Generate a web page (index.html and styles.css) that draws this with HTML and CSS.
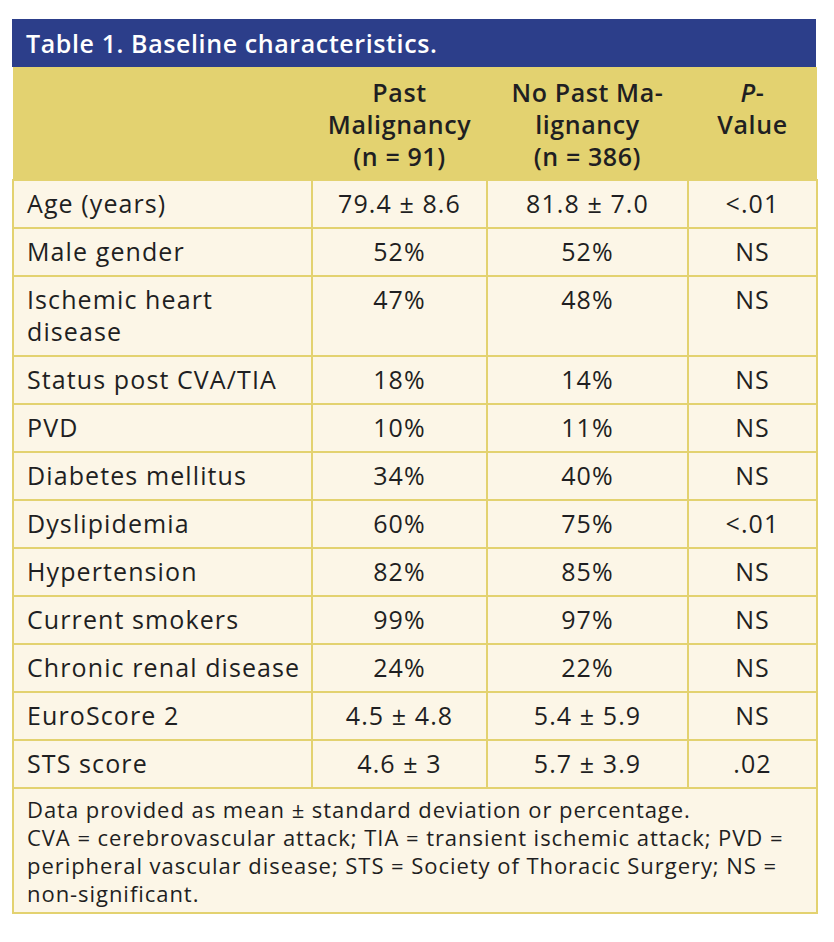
FILE: index.html
```html
<!DOCTYPE html>
<html>
<head>
<meta charset="utf-8">
<link rel="stylesheet" href="styles.css">
</head>
<body>
<div class="wrap">
  <div class="title">Table 1. Baseline characteristics.</div>
  <table class="tbl">
    <colgroup>
      <col class="c1"><col class="c2"><col class="c3"><col class="c4">
    </colgroup>
    <thead>
      <tr>
        <th></th>
        <th>Past<br>Malignancy<br>(n = 91)</th>
        <th>No Past Ma-<br>lignancy<br>(n = 386)</th>
        <th><i>P</i>-<br>Value</th>
      </tr>
    </thead>
    <tbody>
      <tr><td>Age (years)</td><td>79.4 ± 8.6</td><td>81.8 ± 7.0</td><td>&lt;.01</td></tr>
      <tr><td>Male gender</td><td>52%</td><td>52%</td><td>NS</td></tr>
      <tr><td>Ischemic heart<br>disease</td><td>47%</td><td>48%</td><td>NS</td></tr>
      <tr><td>Status post CVA/TIA</td><td>18%</td><td>14%</td><td>NS</td></tr>
      <tr><td>PVD</td><td>10%</td><td>11%</td><td>NS</td></tr>
      <tr><td>Diabetes mellitus</td><td>34%</td><td>40%</td><td>NS</td></tr>
      <tr><td>Dyslipidemia</td><td>60%</td><td>75%</td><td>&lt;.01</td></tr>
      <tr><td>Hypertension</td><td>82%</td><td>85%</td><td>NS</td></tr>
      <tr><td>Current smokers</td><td>99%</td><td>97%</td><td>NS</td></tr>
      <tr><td>Chronic renal disease</td><td>24%</td><td>22%</td><td>NS</td></tr>
      <tr><td>EuroScore 2</td><td>4.5 ± 4.8</td><td>5.4 ± 5.9</td><td>NS</td></tr>
      <tr><td>STS score</td><td>4.6 ± 3</td><td>5.7 ± 3.9</td><td>.02</td></tr>
    </tbody>
    <tfoot>
      <tr><td colspan="4">Data provided as mean ± standard deviation or percentage.<br>CVA = cerebrovascular attack; TIA = transient ischemic attack; PVD =<br>peripheral vascular disease; STS = Society of Thoracic Surgery; NS =<br>non-significant.</td></tr>
    </tfoot>
  </table>
</div>
</body>
</html>
```
FILE: styles.css
```css
html, body {
  margin: 0;
  padding: 0;
  background: #ffffff;
}
body {
  font-family: "Open Sans", "Lato", sans-serif;
  color: #1f1f22;
}
.wrap {
  margin: 19px 0 0 12px;
  width: 804px;
}
.title {
  background: #2c3e8a;
  color: #ffffff;
  font-size: 25px;
  font-weight: 600;
  letter-spacing: 0.6px;
  height: 48px;
  line-height: 48px;
  padding-left: 14px;
  box-sizing: border-box;
}
.tbl {
  width: 804px;
  border-collapse: collapse;
  table-layout: fixed;
  font-size: 25px;
  letter-spacing: 1.1px;
}
.c1 { width: 299px; }
.c2 { width: 175px; }
.c3 { width: 201px; }
.c4 { width: 129px; }
.tbl th {
  background: #e3d270;
  font-weight: 600;
  line-height: 32px;
  height: 113px;
  padding: 9px 2px 6px;
  box-sizing: border-box;
  vertical-align: top;
  text-align: center;
  font-size: 25px;
  letter-spacing: 0.6px;
}
.tbl td {
  background: #fcf6e7;
  border: 2px solid #e3d270;
  line-height: 32px;
  padding: 6px 8px 8px 8px;
  vertical-align: top;
  text-align: center;
}
.tbl td:first-child {
  text-align: left;
  padding-left: 13px;
}
.tbl tfoot td {
  font-size: 22px;
  line-height: 28px;
  letter-spacing: 0.95px;
  padding: 6px 8px 5px 13px;
  text-align: left;
}
```
